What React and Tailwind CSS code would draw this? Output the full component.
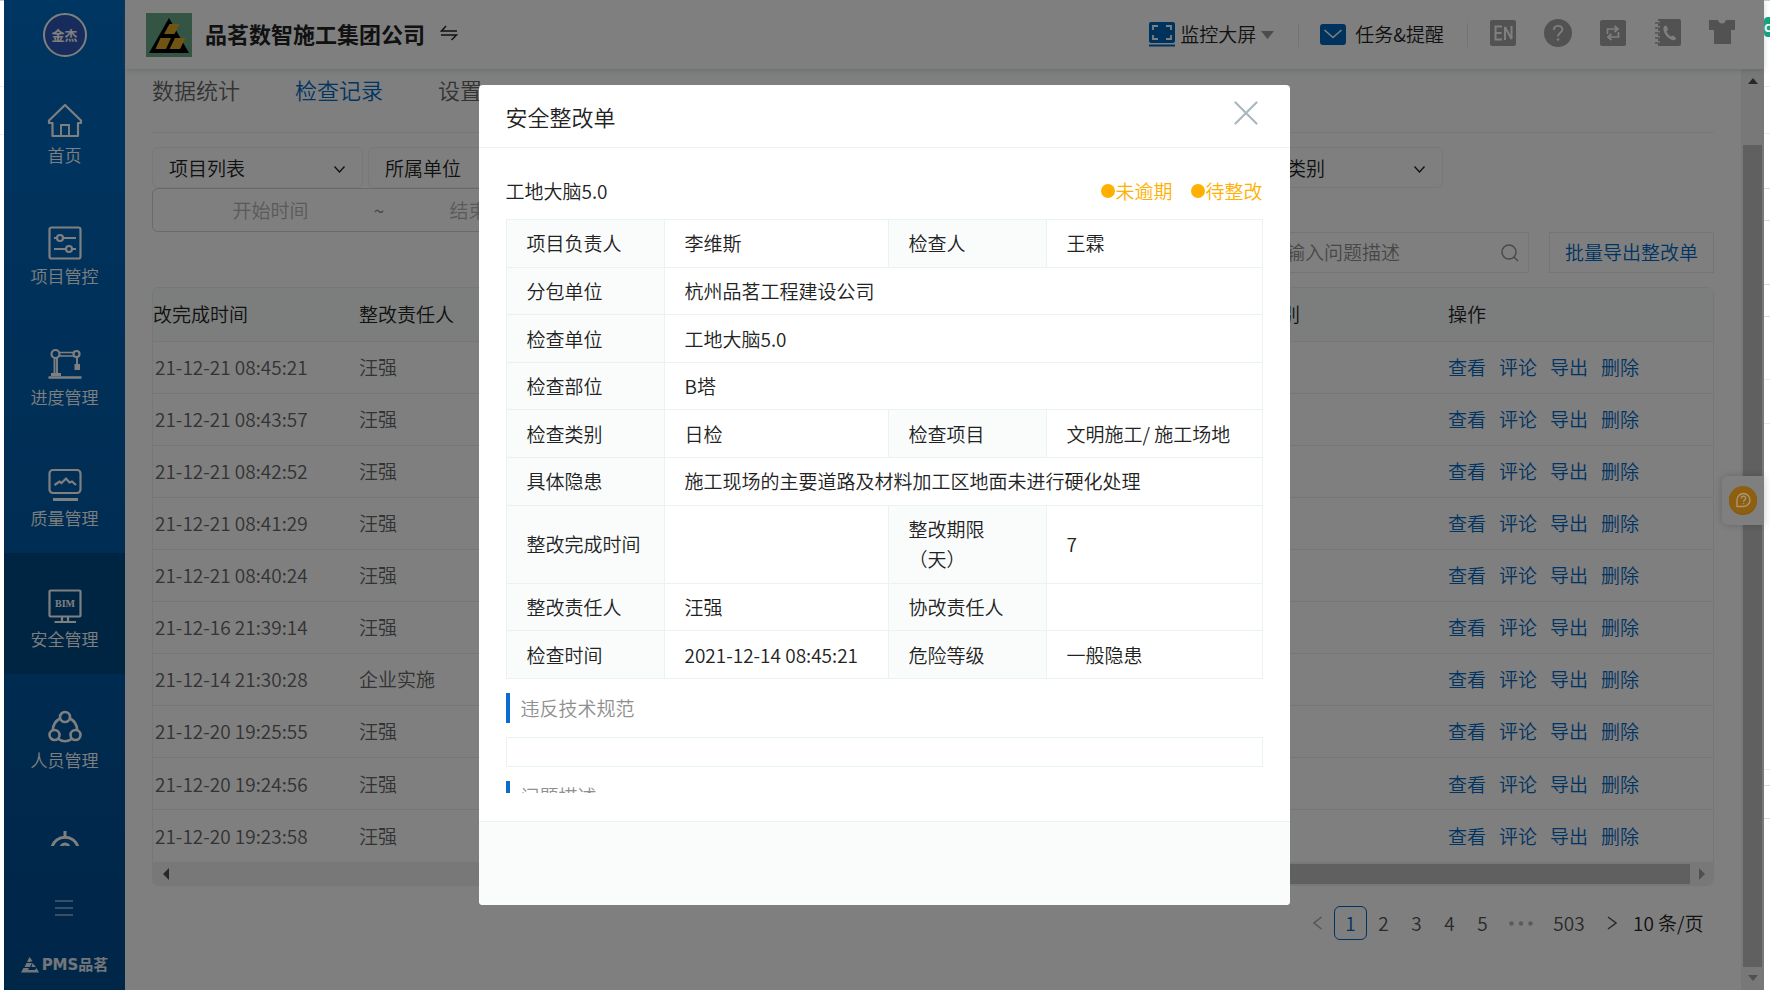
import React from "react";

const navItems = [
  { label: "首页", icon: "home" },
  { label: "项目管控", icon: "sliders" },
  { label: "进度管理", icon: "crane" },
  { label: "质量管理", icon: "monitor" },
  { label: "安全管理", icon: "bim", active: true },
  { label: "人员管理", icon: "people" },
  { label: "", icon: "gauge" },
];

const records = [
  ["21-12-21 08:45:21", "汪强"],
  ["21-12-21 08:43:57", "汪强"],
  ["21-12-21 08:42:52", "汪强"],
  ["21-12-21 08:41:29", "汪强"],
  ["21-12-21 08:40:24", "汪强"],
  ["21-12-16 21:39:14", "汪强"],
  ["21-12-14 21:30:28", "企业实施"],
  ["21-12-20 19:25:55", "汪强"],
  ["21-12-20 19:24:56", "汪强"],
  ["21-12-20 19:23:58", "汪强"],
];

const details = [
  ["项目负责人", "李维斯", "检查人", "王霖"],
  ["分包单位", "杭州品茗工程建设公司"],
  ["检查单位", "工地大脑5.0"],
  ["检查部位", "B塔"],
  ["检查类别", "日检", "检查项目", "文明施工/ 施工场地"],
  ["具体隐患", "施工现场的主要道路及材料加工区地面未进行硬化处理"],
  ["整改完成时间", "", "整改期限（天）", "7"],
  ["整改责任人", "汪强", "协改责任人", ""],
  ["检查时间", "2021-12-14 08:45:21", "危险等级", "一般隐患"],
];

const filters = ["项目列表", "所属单位", "检查单位", "整改状态", "逾期状态", "检查类别"];

function NavIcon({ name }) {
  const p = { width: 34, height: 34, viewBox: "0 0 34 34", fill: "none", stroke: "currentColor", strokeWidth: 2.2, "aria-hidden": true };
  switch (name) {
    case "home":
      return (
        <svg {...p} className="overflow-visible">
          <path d="M1 15.500 L17 0 L33 15.500 V18 H30 V31 H4.500 V18 H1 Z" strokeLinejoin="round" />
          <path d="M13 31 V20 H21 V31" strokeWidth="1.900" />
        </svg>
      );
    case "sliders":
      return (
        <svg {...p}>
          <rect x="1.500" y="1.500" width="31" height="31" rx="2" />
          <circle cx="12" cy="12" r="3" />
          <path d="M6 12 H9 M15 12 H28 M6 23 H18 M24 23 H28" />
          <circle cx="21" cy="23" r="3" />
        </svg>
      );
    case "crane":
      return (
        <svg {...p}>
          <circle cx="7.500" cy="7" r="4" />
          <circle cx="28.500" cy="7" r="3" />
          <path d="M11.500 5.500 H25.500 M11.500 9 H25.500" strokeWidth="1.700" />
          <path d="M6.500 11 V26 M9 11 V26 M29 10 V17" strokeWidth="1.900" />
          <path d="M3 26 H13 V29 H3 Z M26.500 17 H32 V23 H26.500 Z" fill="currentColor" stroke="none" />
          <path d="M0.500 30.500 H33.500" strokeWidth="2.500" />
        </svg>
      );
    case "monitor":
      return (
        <svg {...p}>
          <rect x="1.500" y="2" width="31" height="23" rx="3.500" />
          <path d="M6.500 17 L11.500 13.500 L13.500 15 L18 10.500 L21.500 14.500 L24 13.500 L28 17" />
          <path d="M5 31.500 H30" strokeWidth="3" />
        </svg>
      );
    case "bim":
      return (
        <svg {...p}>
          <rect x="1.500" y="1.500" width="31" height="26" rx="1" />
          <path d="M14 27 V32 M20 27 V32 M6.500 33 H28" />
          <text x="17" y="18" fontFamily="Liberation Serif, serif" fontWeight="bold" fontSize="10" textAnchor="middle" fill="currentColor" stroke="none">BIM</text>
        </svg>
      );
    case "people":
      return (
        <svg {...p} strokeWidth="2.600">
          <circle cx="17" cy="7" r="5" />
          <circle cx="6.500" cy="25" r="5" />
          <circle cx="27.500" cy="25" r="5" />
          <path d="M12 8.500 C7.500 11 5 15 4.800 20 M22 8.500 C26.500 11 29 15 29.200 20 M10.500 29 C14.500 31.800 19.500 31.800 23.500 29" />
        </svg>
      );
    default:
      return (
        <svg {...p} strokeWidth="3">
          <path d="M4 16 A13.500 13.500 0 0 1 30 16 M17 0 V7" />
          <circle cx="17" cy="17" r="4" />
        </svg>
      );
  }
}

function Sidebar() {
  return (
    <nav className="flex w-[121px] shrink-0 flex-col items-center bg-linear-to-b from-[#006cc4] to-[#004c90] text-white">
      <div className="flex h-[69px] shrink-0 items-center pb-2">
        <div className="mt-2 flex h-11 w-11 items-center justify-center rounded-full border-2 border-white bg-[#2f58b8] text-[13px] font-bold">金杰</div>
      </div>
      <ul className="min-h-0 w-full flex-1 overflow-hidden">
        {navItems.map((item) => (
          <li key={item.icon}>
            <a href="#" className={"flex h-[121px] flex-col items-center gap-1 pt-9 text-[17px] leading-6 " + (item.active ? "bg-[#004a86]" : "")}>
              <NavIcon name={item.icon} />
              {item.label}
            </a>
          </li>
        ))}
      </ul>
      <div className="flex h-36 shrink-0 flex-col items-center pt-[53px]">
        <button aria-label="展开菜单" className="text-white/60">
          <svg width="18" height="18" viewBox="0 0 18 18" stroke="currentColor" strokeWidth="1.500"><path d="M0 2 H18 M0 9 H18 M0 16 H18" /></svg>
        </button>
        <div className="mt-9 flex items-center gap-[3px] text-[15px] font-bold leading-6 text-white/90">
          <svg width="18" height="16" viewBox="0 0 18 16" fill="currentColor" aria-hidden="true">
            <path d="M8.500 0 L11.500 4 L9 5 H6 Z M5.500 6 H11 L9 10 H3.500 Z M11.500 6 L15 10 H10.500 Z M2.500 11 H8 L7 13 H14 L15.500 11 L18 15.500 H0 Z" />
          </svg>
          <span className="font-['DejaVu_Sans','Noto_Sans_CJK_SC',sans-serif]">PMS品茗</span>
        </div>
      </div>
    </nav>
  );
}

function Header() {
  return (
    <header className="z-10 flex h-[69px] shrink-0 items-center bg-white pl-[21px] pr-[29px] shadow-[0_1px_6px_rgba(120,150,150,0.35)]">
      <svg width="46" height="44" viewBox="0 0 46 44" aria-hidden="true">
        <rect width="46" height="44" fill="#68a888" />
        <path d="M23 5 L43 40 H3 Z" fill="#000" />
        <path d="M23.500 11 H33.500 L28.500 21 H18 Z M14.500 25 H25 L20 36 H9.500 Z M29 25 H39.500 L34 36 H23.500 Z" fill="#e0a828" />
      </svg>
      <h1 className="ml-[13px] whitespace-nowrap pb-0.5 text-[22px] font-bold text-[#222]">品茗数智施工集团公司</h1>
      <button aria-label="切换公司" className="ml-[15px] pb-1">
        <svg width="18" height="18" viewBox="0 0 18 18" fill="none" stroke="#222" strokeWidth="1.500"><path d="M6 2 L1.500 7 H17 M1 11 H16.500 L11.500 16" /></svg>
      </button>
      <div className="flex-1" />
      <button className="flex items-center gap-[5px] text-[19px] text-[#222]">
        <svg width="26" height="26" viewBox="0 0 26 26" fill="none" aria-hidden="true">
          <rect width="26" height="21" rx="2" fill="#0064bc" />
          <path d="M4 8 V4 H9 M17 4 H22 V8 M22 13 V17 H17 M9 17 H4 V13" stroke="#fff" strokeWidth="1.800" />
          <path d="M0 23.500 H26" stroke="#0064bc" strokeWidth="2" />
        </svg>
        监控大屏
        <svg width="13" height="8" viewBox="0 0 13 8" fill="#999" aria-hidden="true"><path d="M0 0 H13 L6.500 8 Z" /></svg>
      </button>
      <span className="ml-6 h-6 w-px bg-[#e6e6e6]" />
      <button className="ml-[21px] flex items-center gap-[9px] text-[19px] text-[#222]">
        <svg width="26" height="21" viewBox="0 0 26 21" fill="none" aria-hidden="true">
          <rect width="26" height="21" rx="3" fill="#0064bc" />
          <path d="M4.500 6 L13 13.500 L21.500 6" stroke="#fff" strokeWidth="1.600" />
        </svg>
        任务&amp;提醒
      </button>
      <span className="ml-[23px] h-6 w-px bg-[#e6e6e6]" />
      <div className="ml-[22px] flex items-center gap-7 pb-1">
        <button aria-label="English">
          <svg width="26" height="26" viewBox="0 0 26 26" fill="none"><rect width="26" height="26" rx="2" fill="#a4a4a4" /><path d="M12 6.500 H5.500 V19.500 H12 M5.500 13 H11.500 M15 20 V7 L21.500 19 V6" stroke="#fff" strokeWidth="2" /></svg>
        </button>
        <button aria-label="帮助">
          <svg width="28" height="28" viewBox="0 0 28 28" fill="none"><circle cx="14" cy="14" r="14" fill="#a4a4a4" /><path d="M9.800 11 C9.800 5.500 18.500 5.500 18.500 10.500 C18.500 13.500 14 13.500 14 17.500" stroke="#fff" strokeWidth="1.800" /><circle cx="14" cy="20.500" r="1.300" fill="#fff" /></svg>
        </button>
        <button aria-label="切换">
          <svg width="26" height="26" viewBox="0 0 26 26" fill="none"><rect width="26" height="26" rx="2" fill="#a4a4a4" /><path d="M7.500 14 V9 H17.500 M14.500 6 L18 9 L14.500 12 M18.500 12 V17 H8.500 M11.500 14 L8 17 L11.500 20" stroke="#fff" strokeWidth="1.700" /></svg>
        </button>
        <button aria-label="通讯录">
          <svg width="27" height="27" viewBox="0 0 27 27" fill="none">
            <path d="M4 0 H25 Q27 0 27 2 V25 Q27 27 25 27 H4 Z" fill="#a4a4a4" />
            <path d="M1 3.500 H6 M1 8.500 H6 M1 13.500 H6 M1 18.500 H6 M1 23.500 H6" stroke="#fff" strokeWidth="3" />
            <path d="M1 4 H6 M1 9 H6 M1 14 H6 M1 19 H6 M1 24 H6" stroke="#a4a4a4" strokeWidth="1.400" />
            <path d="M10.500 7 Q9 8 9.500 11 Q11 18 18 21 Q21 22 22.500 19.500 L19 16.500 L16.500 17.500 Q13.500 15.500 12.500 12.500 L14 10.500 L12.500 6.500 Z" fill="#fff" />
          </svg>
        </button>
        <button aria-label="皮肤">
          <svg width="26" height="25" viewBox="0 0 26 25" fill="#a4a4a4"><path d="M0 0 H9 Q10 3.500 13 3.500 Q16 3.500 17 0 H26 V10 H22 V24 H5 V10 H0 Z" /></svg>
        </button>
      </div>
    </header>
  );
}

function FilterSelect({ label }) {
  return (
    <label className="relative flex w-[211px] shrink-0 items-center">
      <select aria-label={label} className="h-[41px] w-full appearance-none rounded-md border border-[#eaf2f2] bg-transparent pl-4 pr-10 pt-0.5 text-[19px] text-[#222]">
        <option>{label}</option>
      </select>
      <svg className="pointer-events-none absolute right-[18px] top-[19px]" width="11" height="7" viewBox="0 0 11 7" fill="none" stroke="#222" strokeWidth="1.400" aria-hidden="true"><path d="M0.500 0.500 L5.500 6 L10.500 0.500" /></svg>
    </label>
  );
}

function RecordsTable() {
  return (
    <div className="mt-[14px] overflow-hidden rounded-md border border-[#efefef]">
      <table className="h-[574px] w-full table-fixed text-left text-[19px]">
        <colgroup>
          <col className="w-[206px]" />
          <col className="w-[812px]" />
          <col className="w-[277px]" />
          <col />
        </colgroup>
        <thead className="bg-[#f9fcfb] text-[#222]">
          <tr className="h-[53px] border-b border-[#ececec]">
            <th className="font-[350]">改完成时间</th>
            <th className="font-[350]">整改责任人</th>
            <th className="pl-[53px] font-[350]">隐患类别</th>
            <th className="font-[350]">操作</th>
          </tr>
        </thead>
        <tbody className="text-[#666]">
          {records.map(([time, person]) => (
            <tr key={time} className="h-[52px] border-b border-[#ececec] last:border-b-0">
              <td className="pl-0.5">{time}</td>
              <td>{person}</td>
              <td />
              <td>
                <div className="flex gap-[13px] text-[#0068c4]">
                  <a href="#">查看</a>
                  <a href="#">评论</a>
                  <a href="#">导出</a>
                  <a href="#">删除</a>
                </div>
              </td>
            </tr>
          ))}
        </tbody>
      </table>
      <div className="flex h-[23px] items-center bg-[#f1f1f1] pl-[10px] pr-2">
        <svg width="6" height="12" viewBox="0 0 6 12" fill="#505050" aria-hidden="true"><path d="M6 0 V12 L0 6 Z" /></svg>
        <div className="ml-auto mr-[9px] h-5 w-3/5 bg-[#c1c1c1]" />
        <svg width="6" height="12" viewBox="0 0 6 12" fill="#a0a0a0" aria-hidden="true"><path d="M0 0 V12 L6 6 Z" /></svg>
      </div>
    </div>
  );
}

function Pagination() {
  return (
    <div className="mt-5 flex h-[34px] items-center justify-end pr-[10px] text-[19px] text-[#555]">
      <button aria-label="上一页" className="mr-3">
        <svg width="9" height="14" viewBox="0 0 9 14" fill="none" stroke="#aaa" strokeWidth="1.500"><path d="M8.500 1 L1 7 L8.500 13" /></svg>
      </button>
      <button className="h-[34px] w-[33px] rounded-md border border-[#0068c4] text-[#0068c4]">1</button>
      <button className="w-[33px]">2</button>
      <button className="w-[33px]">3</button>
      <button className="w-[33px]">4</button>
      <button className="w-[33px]">5</button>
      <button aria-label="更多页" className="mx-[10px]">
        <svg width="24" height="5" viewBox="0 0 24 5" fill="#b5b5b5"><circle cx="2.500" cy="2.500" r="2.200" /><circle cx="12" cy="2.500" r="2.200" /><circle cx="21.500" cy="2.500" r="2.200" /></svg>
      </button>
      <button className="w-[52px]">503</button>
      <button aria-label="下一页" className="ml-3 mr-4">
        <svg width="10" height="14" viewBox="0 0 10 14" fill="none" stroke="#555" strokeWidth="1.500"><path d="M1 1 L9 7 L1 13" /></svg>
      </button>
      <select aria-label="每页条数" className="appearance-none bg-transparent text-[#222]">
        <option>10 条/页</option>
      </select>
    </div>
  );
}

function Page() {
  return (
    <main className="min-w-0 flex-1 overflow-hidden px-[27px]">
      <div className="flex h-16 gap-[55px] border-b border-[#e8f0f0] pt-[3px] text-[22px] leading-[34px] text-[#666]">
        <a href="#">数据统计</a>
        <a href="#" className="text-[#0068c4]">检查记录</a>
        <a href="#">设置</a>
      </div>
      <div className="mt-[14px] flex gap-[5px]">
        {filters.map((f) => (
          <FilterSelect key={f} label={f} />
        ))}
      </div>
      <div className="flex h-11 w-[480px] items-center rounded-md border border-[#d4d4d4] pl-[14px] pr-10 text-[19px]">
        <input aria-label="开始时间" placeholder="开始时间" className="w-0 flex-1 bg-transparent text-center placeholder:text-[#b4b4b4]" />
        <span className="text-[#888]">~</span>
        <input aria-label="结束时间" placeholder="结束时间" className="w-0 flex-1 bg-transparent text-center placeholder:text-[#b4b4b4]" />
      </div>
      <div className="flex justify-end gap-5 text-[19px]">
        <label className="flex h-[41px] w-[280px] items-center border border-[#e2eeee] pl-[17px] pr-[9px]">
          <input aria-label="问题描述" placeholder="请输入问题描述" className="w-0 flex-1 bg-transparent placeholder:text-[#909090]" />
          <svg width="18" height="18" viewBox="0 0 18 18" fill="none" stroke="#909090" strokeWidth="1.400" aria-hidden="true"><circle cx="8" cy="8" r="7" /><path d="M13 13 L17 17" /></svg>
        </label>
        <button className="h-[41px] w-[165px] border border-[#e2eeee] text-[#0068c4]">批量导出整改单</button>
      </div>
      <RecordsTable />
      <Pagination />
    </main>
  );
}

function PageScrollbar() {
  return (
    <div className="flex w-[23px] shrink-0 flex-col items-center bg-[#f1f1f1] py-[9px]">
      <svg width="10" height="6" viewBox="0 0 10 6" fill="#505050" aria-hidden="true"><path d="M0 6 H10 L5 0 Z" /></svg>
      <div className="mb-2 mt-[61px] w-[19px] flex-1 bg-[#c1c1c1]" />
      <svg width="10" height="6" viewBox="0 0 10 6" fill="#a0a0a0" aria-hidden="true"><path d="M0 0 H10 L5 6 Z" /></svg>
    </div>
  );
}

function SectionTitle({ children }) {
  return <h3 className="mt-[14px] border-l-4 border-[#0a6ccd] pl-[11px] leading-[30px] text-[#909090]">{children}</h3>;
}

function DetailDialog() {
  return (
    <section role="dialog" aria-label="安全整改单" className="flex h-[820px] w-[811px] flex-col overflow-hidden rounded bg-white text-[19px] text-[#222]">
      <header className="flex h-[63px] shrink-0 items-center justify-between border-b border-[#ecf4f4] pl-[27px] pr-8">
        <h2 className="text-[22px]">安全整改单</h2>
        <button aria-label="关闭" className="pb-1.5">
          <svg width="24" height="24" viewBox="0 0 24 24" fill="none" stroke="#a9b8be" strokeWidth="2.200" strokeLinecap="round"><path d="M1.500 1.500 L22.500 22.500 M22.500 1.500 L1.500 22.500" /></svg>
        </button>
      </header>
      <div className="min-h-0 flex-1 px-[27px] py-7">
        <div className="h-full overflow-hidden">
          <div className="flex items-center justify-between leading-[30px]">
            <span>工地大脑5.0</span>
            <div className="flex gap-[19px] text-[#ffb000]">
              <span className="flex items-center"><i className="h-[14px] w-[14px] rounded-full bg-[#ffb000]" />未逾期</span>
              <span className="flex items-center"><i className="h-[14px] w-[14px] rounded-full bg-[#ffb000]" />待整改</span>
            </div>
          </div>
          <table className="mt-[13px] h-[460px] w-full table-fixed border-collapse text-left leading-[30px]">
            <colgroup>
              <col className="w-[158px]" />
              <col className="w-[224px]" />
              <col className="w-[158px]" />
              <col />
            </colgroup>
            <tbody>
              {details.map(([k1, v1, k2, v2]) => (
                <tr key={k1}>
                  <th className="border border-[#e9f3f2] bg-[#fafcfc] px-5 py-2 font-[350]">{k1}</th>
                  <td colSpan={k2 ? 1 : 3} className="border border-[#e9f3f2] py-2 pl-5">{v1}</td>
                  {k2 && <th className="border border-[#e9f3f2] bg-[#fafcfc] px-5 py-2 font-[350]">{k2}</th>}
                  {k2 && <td className="border border-[#e9f3f2] py-2 pl-5">{v2}</td>}
                </tr>
              ))}
            </tbody>
          </table>
          <SectionTitle>违反技术规范</SectionTitle>
          <div className="mt-[14px] h-[30px] border border-[#e9f3f2]" />
          <SectionTitle>问题描述</SectionTitle>
        </div>
      </div>
      <footer className="h-[84px] shrink-0 border-t border-[#e9f3f2] bg-[#fafcfc]" />
    </section>
  );
}

function RightEdge() {
  return (
    <div className="w-1.5 shrink-0 overflow-hidden border-t border-[#ccc] bg-white">
      <div className="h-4" />
      <div className="h-5 overflow-hidden rounded-l bg-[#12a37f] text-[13px] font-bold leading-5 text-white">c</div>
      <div className="h-[50px] border-b border-[#eee]" />
      <div className="h-[47px] border-b border-[#eee]" />
      <div className="h-[55px] border-b border-[#ddd]" />
      <div className="h-8 border-b border-[#ddd]" />
      <div className="h-16 border-b border-[#ddd]" />
      <div className="h-8 border-b border-[#ddd]" />
      <div className="h-[63px] border-b border-[#e3eeee]" />
      <div className="h-11 border-b border-[#e3eeee]" />
      <div className="h-[346px] border-b border-[#e3eeee]" />
      <div className="h-4 border-b border-[#ddd]" />
      <div className="h-[33px] border-b border-[#ddd]" />
    </div>
  );
}

export default function App() {
  return (
    <div className="flex h-screen overflow-hidden bg-white font-['Noto_Sans_CJK_SC',sans-serif] font-[350]">
      <div className="w-1 shrink-0 border-t border-[#ccc]">
        <div className="h-[53px]" />
        <div className="h-[33px] border-b border-[#eee]" />
        <div className="h-12 border-b border-[#eee]" />
      </div>
      <div className="relative flex min-w-0 flex-1">
        <Sidebar />
        <div className="flex min-w-0 flex-1 flex-col">
          <Header />
          <div className="flex min-h-0 flex-1">
            <Page />
            <PageScrollbar />
          </div>
        </div>
        <button aria-label="在线帮助" className="absolute right-0 top-[476px] z-10 flex h-[49px] w-[42px] items-center justify-center rounded-l-md bg-white shadow-[0_0_8px_rgba(0,0,0,0.2)]">
          <span className="h-7 w-7 rounded-full bg-[#ffb020]" />
        </button>
        <div className="absolute inset-0 z-20 flex items-center justify-center bg-black/50">
          <DetailDialog />
        </div>
        <div className="pointer-events-none absolute right-[7px] top-[486px] z-30">
          <svg width="28" height="28" viewBox="0 0 28 28" fill="none" aria-hidden="true">
            <circle cx="14" cy="14" r="14" fill="#8f5f10" />
            <path d="M8 20.500 V14 A6.500 6.500 0 1 1 14.500 20.500 Z" stroke="#a89878" strokeWidth="1.400" />
            <path d="M12.300 12.500 C12.300 9.500 16.700 9.500 16.700 12.300 C16.700 14 14.500 14 14.500 15.800 M14.500 17 V18.300" stroke="#a89878" strokeWidth="1.300" />
          </svg>
        </div>
      </div>
      <RightEdge />
    </div>
  );
}
